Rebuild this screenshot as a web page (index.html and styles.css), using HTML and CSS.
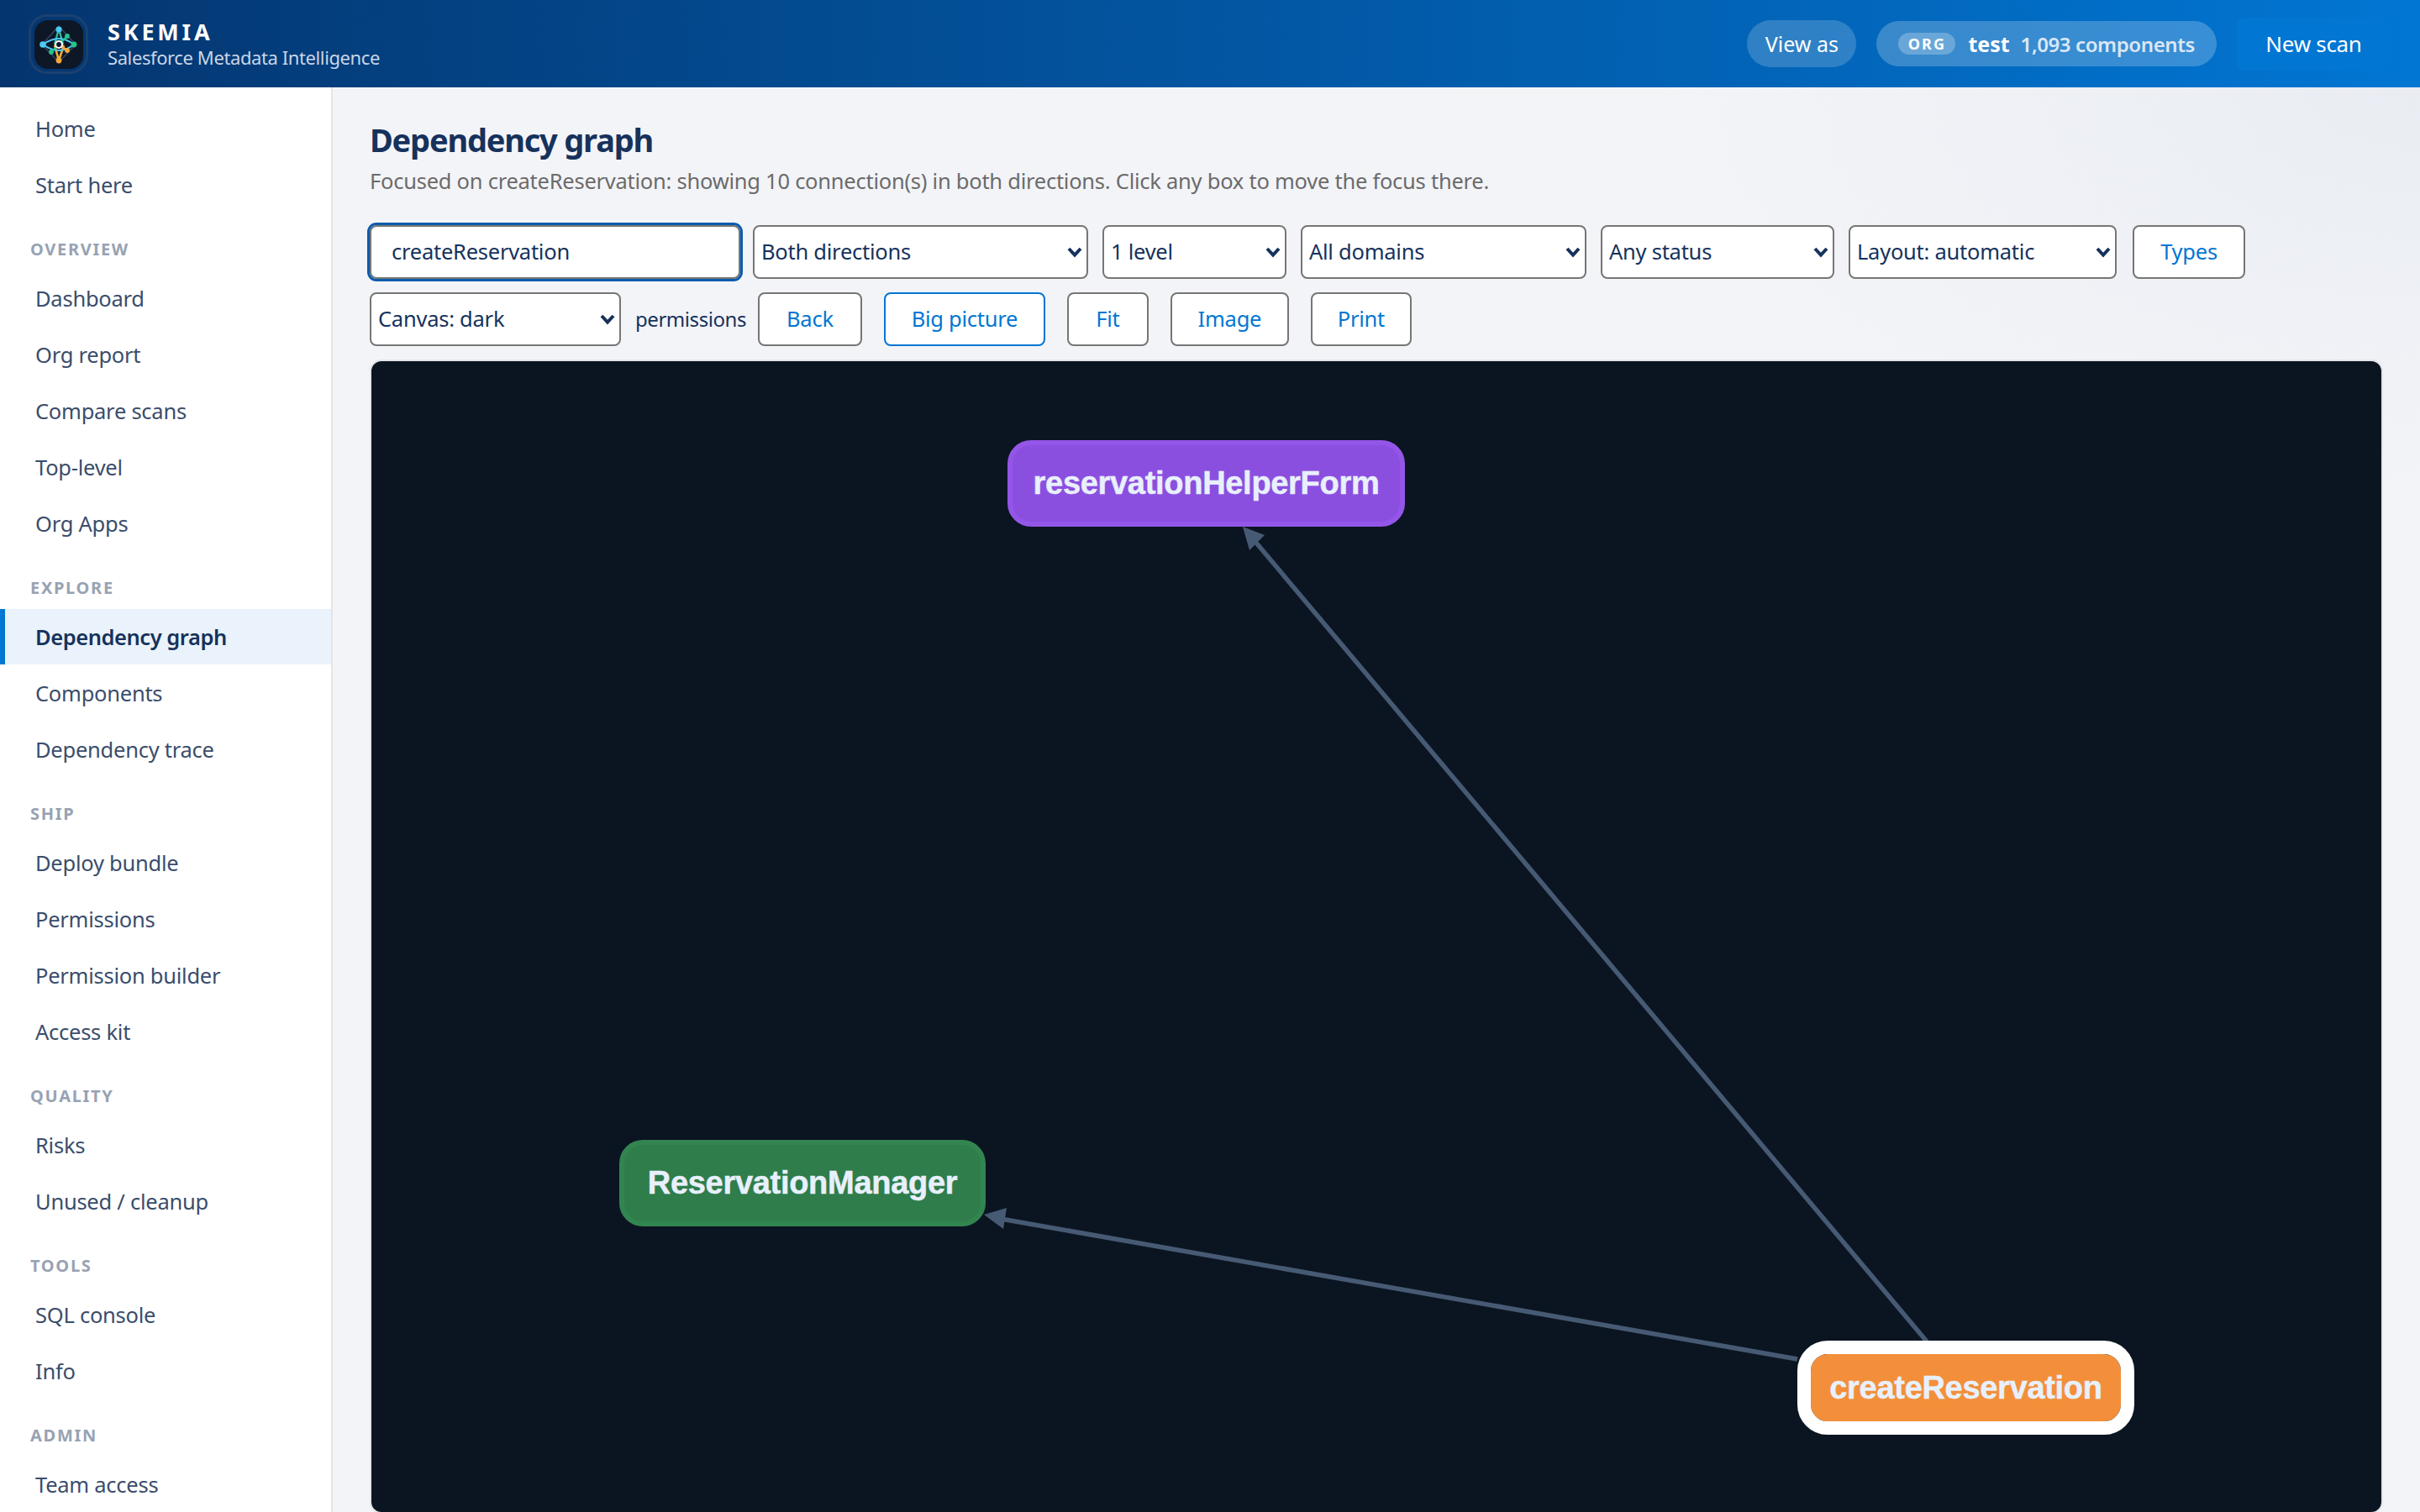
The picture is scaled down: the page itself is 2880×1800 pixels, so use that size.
FILE: index.html
```html
<!DOCTYPE html>
<html lang="en">
<head>
    <meta charset="UTF-8">
    <title>Skemia - Dependency graph</title>
    <link rel="stylesheet" href="styles.css">
</head>
<body>

    <header class="topbar">
        <div class="brand">
            <div class="logo">
                <svg viewBox="0 0 58 58" width="58" height="58">
                    <path d="M29 7 L49 29 L29 50 L9 29 Z" fill="none" stroke="#34465f" stroke-width="1.5"/>
                    <path d="M29 10 L24 29 M29 10 L34 29" stroke="#2fb8a0" stroke-width="2.4" fill="none"/>
                    <path d="M29 48 L24 30 M29 48 L35 30" stroke="#f5a93a" stroke-width="2.6" fill="none"/>
                    <path d="M10 29 Q20 22 29 22 Q38 22 47 29" stroke="#4cc9f5" stroke-width="2" fill="none"/>
                    <path d="M10 29 Q20 36 29 36 Q38 36 47 29" stroke="#4cc9f5" stroke-width="2" fill="none"/>
                    <path d="M39 19 L31 27 M20 38 L27 31" stroke="#22c58b" stroke-width="2.4"/>
                    <path d="M39 36 L32 31" stroke="#f5a93a" stroke-width="2.6"/>
                    <circle cx="29" cy="11" r="3.6" fill="#4cc9f5"/>
                    <circle cx="10" cy="29" r="3.8" fill="#4cc9f5"/>
                    <circle cx="47" cy="29" r="3.4" fill="#22c58b"/>
                    <circle cx="29" cy="48" r="3.4" fill="#f5a93a"/>
                    <circle cx="39" cy="19" r="2.9" fill="#22c58b"/>
                    <circle cx="39" cy="36" r="2.9" fill="#f5a93a"/>
                    <circle cx="20" cy="38" r="2.9" fill="#22c58b"/>
                    <circle cx="29" cy="29" r="4" fill="#0d1726" stroke="#ffffff" stroke-width="2.2"/>
                </svg>
            </div>
            <div class="brand-text">
                <div class="brand-name">SKEMIA</div>
                <div class="brand-sub">Salesforce Metadata Intelligence</div>
            </div>
        </div>
        <div class="topbar-right">
            <button class="view-as">View as</button>
            <div class="org-pill">
                <span class="org-chip">ORG</span>
                <span class="org-name">test</span>
                <span class="org-count">1,093 components</span>
            </div>
            <button class="new-scan">New scan</button>
        </div>
    </header>

    <div class="layout">
        <nav class="sidebar">
            <a class="nav-item">Home</a>
            <a class="nav-item">Start here</a>

            <div class="nav-label">Overview</div>
            <a class="nav-item">Dashboard</a>
            <a class="nav-item">Org report</a>
            <a class="nav-item">Compare scans</a>
            <a class="nav-item">Top-level</a>
            <a class="nav-item">Org Apps</a>

            <div class="nav-label">Explore</div>
            <a class="nav-item active">Dependency graph</a>
            <a class="nav-item">Components</a>
            <a class="nav-item">Dependency trace</a>

            <div class="nav-label">Ship</div>
            <a class="nav-item">Deploy bundle</a>
            <a class="nav-item">Permissions</a>
            <a class="nav-item">Permission builder</a>
            <a class="nav-item">Access kit</a>

            <div class="nav-label">Quality</div>
            <a class="nav-item">Risks</a>
            <a class="nav-item">Unused / cleanup</a>

            <div class="nav-label">Tools</div>
            <a class="nav-item">SQL console</a>
            <a class="nav-item">Info</a>

            <div class="nav-label">Admin</div>
            <a class="nav-item">Team access</a>
        </nav>

        <main class="content">
            <h1>Dependency graph</h1>
            <p class="subtitle">Focused on createReservation: showing 10 connection(s) in both directions. Click any box to move the focus there.</p>

            <div class="toolbar">
                <input type="text" class="focus-input" value="createReservation">
                <select class="w-direction"><option>Both directions</option></select>
                <select class="w-level"><option>1 level</option></select>
                <select class="w-domain"><option>All domains</option></select>
                <select class="w-status"><option>Any status</option></select>
                <select class="w-layout"><option>Layout: automatic</option></select>
                <button class="btn btn-types">Types</button>
            </div>

            <div class="toolbar">
                <select class="w-canvas"><option>Canvas: dark</option></select>
                <span class="perm-label">permissions</span>
                <button class="btn w-back">Back</button>
                <button class="btn btn-on w-big">Big picture</button>
                <button class="btn w-fit">Fit</button>
                <button class="btn w-image">Image</button>
                <button class="btn w-print">Print</button>
            </div>

            <!-- node and edge coordinates are relative to the canvas box -->
            <div class="canvas">
                <svg class="edges" width="2392" height="1372">
                    <line x1="1851" y1="1167" x2="1047" y2="209" class="edge"/>
                    <polygon points="1037,197 1063,207 1045,225" class="arrow"/>
                    <line x1="1697" y1="1188" x2="749" y2="1021" class="edge"/>
                    <polygon points="729,1016 756,1008 752,1033" class="arrow"/>
                </svg>
                <div class="node node-purple">reservationHelperForm</div>
                <div class="node node-green">ReservationManager</div>
                <div class="node node-focus">createReservation</div>
            </div>
        </main>
    </div>

</body>
</html>
```

FILE: styles.css
```css
* {
    box-sizing: border-box;
}

html, body {
    height: 100%;
}

body {
    margin: 0;
    font-family: "Noto Sans", sans-serif;
    background-color: #f3f4f8;
    color: #16325c;
    overflow: hidden;
}

.topbar {
    height: 104px;
    background: linear-gradient(90deg, #04356f 0%, #0176d3 100%);
    display: flex;
    justify-content: space-between;
    align-items: center;
    padding: 0 35px 0 34px;
    color: #ffffff;
}

.brand {
    display: flex;
    align-items: center;
    gap: 23px;
}

.logo {
    width: 71px;
    height: 71px;
    padding: 4px;
    border: 3px solid #1c416f;
    border-radius: 22px;
}

.logo svg {
    display: block;
    background-color: #0d1726;
    border-radius: 16px;
}

.brand-name {
    font-size: 27px;
    line-height: 32px;
    font-weight: 700;
    letter-spacing: 3.8px;
}

.brand-sub {
    font-size: 22px;
    line-height: 28px;
    letter-spacing: -0.4px;
    color: #c9d6e7;
}

.topbar-right {
    display: flex;
    align-items: center;
    gap: 24px;
}

.view-as {
    height: 56px;
    width: 130px;
    padding: 0;
    border: none;
    border-radius: 28px;
    background-color: rgba(255, 255, 255, 0.18);
    color: #ffffff;
    font-family: inherit;
    font-size: 25px;
}

.org-pill {
    display: flex;
    align-items: center;
    height: 54px;
    padding: 0 26px;
    border-radius: 27px;
    background-color: rgba(255, 255, 255, 0.22);
}

.org-chip {
    width: 68px;
    height: 26px;
    border-radius: 13px;
    background-color: rgba(255, 255, 255, 0.25);
    font-size: 18px;
    line-height: 26px;
    font-weight: 700;
    letter-spacing: 2px;
    text-align: center;
    margin-right: 15px;
}

.org-name {
    font-size: 25px;
    font-weight: 700;
    margin-right: 13px;
}

.org-count {
    font-size: 24px;
    font-weight: 600;
    letter-spacing: -0.4px;
    color: #dbe7f5;
}

.new-scan {
    height: 63px;
    width: 183px;
    padding: 0;
    border: none;
    border-radius: 8px;
    background-color: #0176d3;
    color: #ffffff;
    font-family: inherit;
    font-size: 26px;
    letter-spacing: -0.3px;
}

.layout {
    display: flex;
    height: calc(100% - 104px);
}

.sidebar {
    flex: 0 0 396px;
    background-color: #ffffff;
    border-right: 2px solid #e5e5e5;
    padding-top: 16px;
    overflow: hidden;
}

.nav-item {
    display: flex;
    align-items: center;
    height: 67px;
    padding: 0 0 2px 42px;
    font-size: 25.5px;
    letter-spacing: -0.25px;
    color: #3a4d6b;
}

.nav-item.active {
    height: 66px;
    margin-bottom: 1px;
    padding: 0 0 0 36px;
    border-left: 6px solid #0176d3;
    background-color: #eaf2fb;
    color: #16325c;
    font-weight: 600;
    letter-spacing: -0.45px;
}

.nav-label {
    height: 26px;
    margin: 30px 0 12px 36px;
    font-size: 20px;
    line-height: 26px;
    font-weight: 700;
    letter-spacing: 1.7px;
    text-transform: uppercase;
    color: #98a2b3;
}

.content {
    flex: 1;
    min-width: 0;
    padding: 36px 44px 0 44px;
    background-image: radial-gradient(ellipse 900px 500px at top right, #e9edf3, transparent);
}

h1 {
    margin: 0;
    font-size: 38px;
    line-height: 52px;
    font-weight: 700;
    letter-spacing: -1.2px;
    color: #16325c;
}

.subtitle {
    margin: 6px 0 36px;
    font-size: 25.5px;
    line-height: 34px;
    letter-spacing: -0.25px;
    color: #6b6b6b;
}

.toolbar {
    display: flex;
    align-items: center;
    gap: 17px;
    margin-bottom: 16px;
}

select, input, .btn {
    height: 64px;
    border: 2px solid #767676;
    border-radius: 8px;
    background-color: #ffffff;
    font-family: inherit;
    font-size: 25.5px;
    letter-spacing: -0.25px;
    color: #16325c;
}

select {
    appearance: none;
    padding: 0 8px 3px;
    background-image: url("data:image/svg+xml,%3Csvg xmlns='http://www.w3.org/2000/svg' width='20' height='14'%3E%3Cpath d='M3 3 L10 10.5 L17 3' fill='none' stroke='%2316325c' stroke-width='4'/%3E%3C/svg%3E");
    background-repeat: no-repeat;
    background-position: right 4px center;
}

.focus-input {
    width: 441px;
    margin-right: -2px;
    padding: 0 24px 3px;
    outline: 3px solid #0b5cab;
}

.w-direction { width: 399px; }
.w-level { width: 219px; }
.w-domain { width: 340px; }
.w-status { width: 278px; }
.w-layout { width: 319px; }
.w-canvas { width: 299px; }

.btn {
    padding: 0 0 3px;
    color: #0176d3;
}

.btn-on {
    border-color: #0176d3;
}

.btn-types {
    width: 134px;
    margin-left: 2px;
}

.perm-label {
    font-size: 24px;
    letter-spacing: -0.45px;
    padding-bottom: 2px;
    color: #16325c;
}

.w-back { width: 124px; margin-left: -3px; }
.w-big { width: 192px; margin-left: 9px; }
.w-fit { width: 97px; margin-left: 9px; }
.w-image { width: 141px; margin-left: 9px; }
.w-print { width: 120px; margin-left: 9px; }

.canvas {
    position: relative;
    height: 1374px;
    background-color: #0b1522;
    border: 2px solid #e3e5e8;
    border-radius: 14px;
}

.edges {
    position: absolute;
    left: 0;
    top: 0;
}

.edge {
    stroke: #475a73;
    stroke-width: 5.5;
}

.arrow {
    fill: #475a73;
}

.node {
    position: absolute;
    display: flex;
    align-items: center;
    justify-content: center;
    font-family: "Liberation Sans", sans-serif;
    font-size: 38px;
    font-weight: 700;
    letter-spacing: -0.3px;
    -webkit-text-stroke: 0.5px #e8f0fc;
    color: #e8f0fc;
}

.node-purple {
    left: 757px;
    top: 94px;
    width: 473px;
    height: 103px;
    background-color: #8b4fe0;
    border: 6px solid #9456e8;
    border-radius: 28px;
}

.node-green {
    left: 295px;
    top: 927px;
    width: 436px;
    height: 103px;
    background-color: #2f7d4b;
    border: 6px solid #338550;
    border-radius: 28px;
}

.node-focus {
    left: 1697px;
    top: 1166px;
    width: 401px;
    height: 112px;
    background-color: #f38f3a;
    border: 16px solid #ffffff;
    border-radius: 36px;
    background-clip: padding-box;
}
```
